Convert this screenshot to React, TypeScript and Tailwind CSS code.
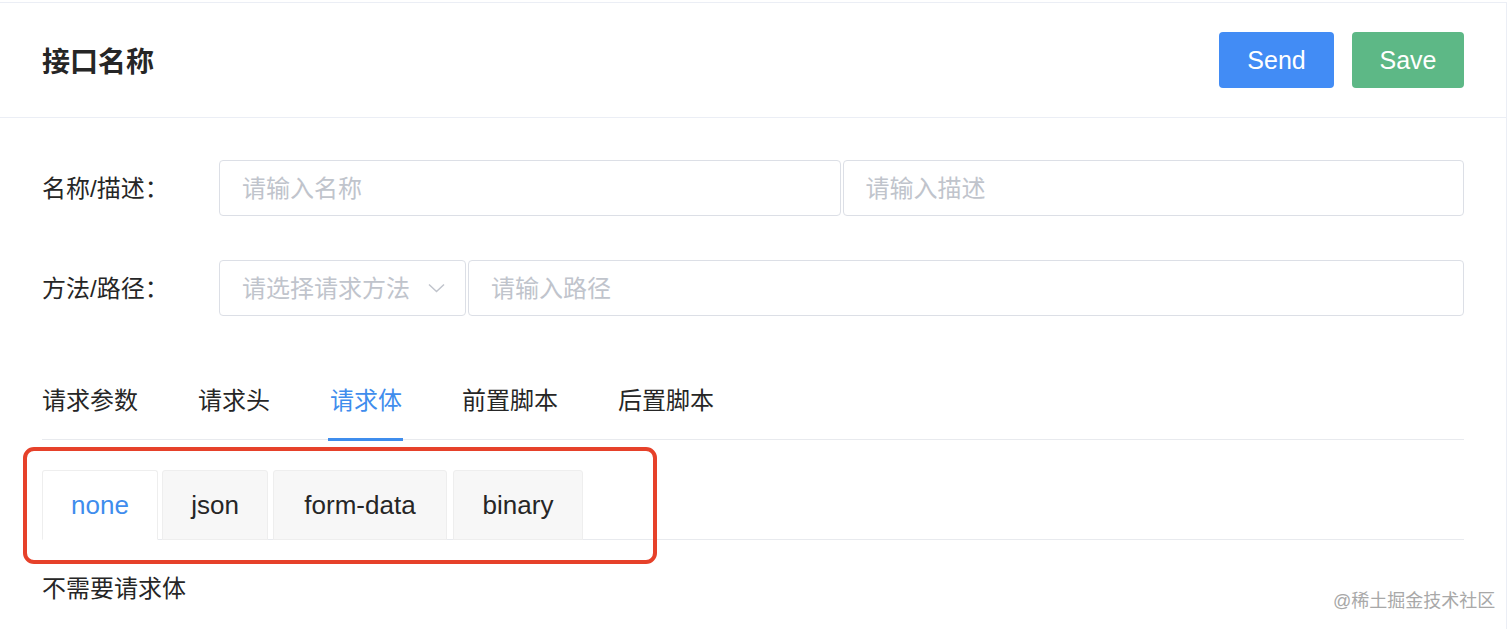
import { useState } from 'react';

const font = { fontFamily: '"Liberation Sans", "Noto Sans CJK SC", sans-serif' };

const navTabs = ['请求参数', '请求头', '请求体', '前置脚本', '后置脚本'];

const bodyTabs = [
  { key: 'none', w: 'w-[116px]', ml: 'ml-0' },
  { key: 'json', w: 'w-[106px]', ml: 'ml-[4px]' },
  { key: 'form-data', w: 'w-[174px]', ml: 'ml-[5px]' },
  { key: 'binary', w: 'w-[130px]', ml: 'ml-[6px]' },
];

function Field({ placeholder, className }: { placeholder: string; className: string }) {
  return (
    <div className={`h-[56px] border border-[#dcdfe6] rounded-[4px] flex items-center pl-[22px] ${className}`}>
      <span className="text-[24px] text-[#c0c4cc] leading-none pt-[2px]">{placeholder}</span>
    </div>
  );
}

export default function App() {
  const [tab, setTab] = useState('请求体');
  const [bodyTab, setBodyTab] = useState('none');

  return (
    <div className="relative w-[1512px] h-[629px] bg-white overflow-hidden" style={font}>
      <div className="w-[1507px] h-[627px] mt-[2px] border-t border-r border-[#ebeef5]">
        {/* Header */}
        <div className="h-[115px] border-b border-[#ebeef5] flex items-center justify-between pl-[42px] pr-[42px]">
          <h1 className="text-[28px] font-bold text-[#262626] leading-none pt-[5px]">接口名称</h1>
          <div className="flex gap-[18px]">
            <button className="w-[115px] h-[56px] rounded-[4px] bg-[#428cf5] text-white text-[25px] pt-[2px]">Send</button>
            <button className="w-[112px] h-[56px] rounded-[4px] bg-[#5db886] text-white text-[25px] pt-[2px]">Save</button>
          </div>
        </div>

        <div className="pl-[42px] pr-[42px] pt-[42px]">
          {/* Form rows */}
          <div className="flex items-center">
            <label className="w-[177px] text-[24px] text-[#262626] leading-none pt-[2px]">名称/描述：</label>
            <div className="flex-1 flex gap-[2px]">
              <Field placeholder="请输入名称" className="flex-1" />
              <Field placeholder="请输入描述" className="flex-1" />
            </div>
          </div>
          <div className="flex items-center mt-[44px]">
            <label className="w-[177px] text-[24px] text-[#262626] leading-none pt-[2px]">方法/路径：</label>
            <div className="flex-1 flex gap-[2px]">
              <div className="w-[247px] h-[56px] border border-[#dcdfe6] rounded-[4px] flex items-center justify-between pl-[22px] pr-[20px]">
                <span className="text-[24px] text-[#c0c4cc] leading-none pt-[2px]">请选择请求方法</span>
                <svg width="17" height="10" viewBox="0 0 17 10" fill="none">
                  <path d="M1 1.5L8.5 8.5L16 1.5" stroke="#c0c4cc" strokeWidth="1.5" />
                </svg>
              </div>
              <Field placeholder="请输入路径" className="flex-1" />
            </div>
          </div>

          {/* Nav tabs */}
          <div className="mt-[44px] flex gap-[60px] border-b border-[#e8eaee]">
            {navTabs.map((t) => (
              <button
                key={t}
                onClick={() => setTab(t)}
                className={`relative h-[79px] text-[24px] leading-none pt-[2px] ${t === tab ? 'text-[#3f8ded]' : 'text-[#262626]'}`}
              >
                {t}
                {t === tab && <span className="absolute left-[-2px] right-[-1px] bottom-[-2px] h-[3px] bg-[#3f8ded]" />}
              </button>
            ))}
          </div>

          {/* Body type tabs */}
          <div className="mt-[30px] flex border-b border-[#e8eaee]">
            {bodyTabs.map((b) => (
              <button
                key={b.key}
                onClick={() => setBodyTab(b.key)}
                className={`${b.w} ${b.ml} h-[70px] -mb-px border border-[#eeeeee] rounded-t-[3px] text-[26px] leading-none ${
                  b.key === bodyTab ? 'bg-white border-b-white text-[#3f8ded]' : 'bg-[#f7f7f7] text-[#262626]'
                }`}
              >
                {b.key}
              </button>
            ))}
          </div>

          <p className="mt-[37px] text-[24px] leading-[24px] text-[#262626]">不需要请求体</p>
        </div>
      </div>

      {/* Annotation box */}
      <div className="absolute left-[23px] top-[447px] w-[634px] h-[117px] border-[4px] border-[#e6412a] rounded-[11px]" />

      {/* Watermark */}
      <span className="absolute left-[1333px] top-[591px] text-[18px] leading-[20px] text-[#a8a8a8]">@稀土掘金技术社区</span>
    </div>
  );
}
